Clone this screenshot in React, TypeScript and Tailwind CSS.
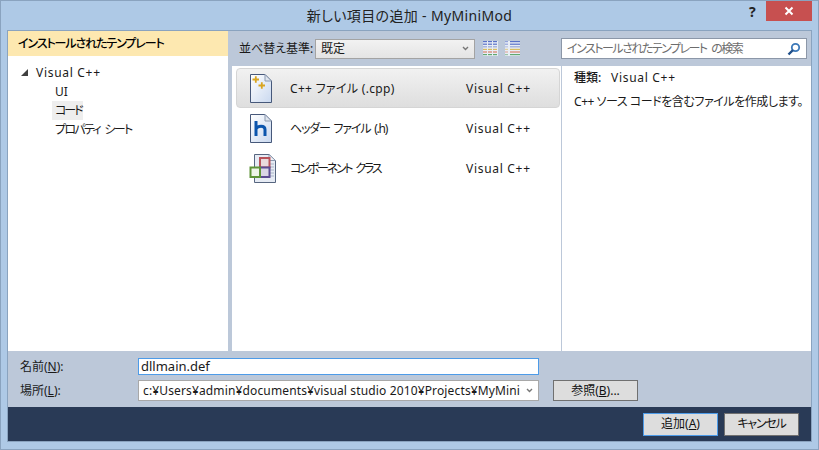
const FONT = "font-['Noto_Sans','Noto_Sans_CJK_JP',sans-serif] [font-feature-settings:'palt']";

function DocIcon({ children }: { children?: React.ReactNode }) {
  return (
    <svg width="24" height="31" viewBox="0 0 24 31" className="shrink-0">
      <defs>
        <linearGradient id="doc" x1="0" y1="0" x2="1" y2="1">
          <stop offset="0" stopColor="#ffffff" />
          <stop offset="1" stopColor="#c9d8ef" />
        </linearGradient>
      </defs>
      <path d="M1.5 1.5H16L22.5 8V29.5H1.5Z" fill="url(#doc)" stroke="#46587a" />
      <path d="M16 1.5V8H22.5Z" fill="#dfe5ee" stroke="#8c9ab0" />
      {children}
    </svg>
  );
}

function CppIcon() {
  return (
    <DocIcon>
      <path d="M3.5 6.5H10M6.8 3.2V9.8M9.5 12.5H16M12.8 9.2V15.8" stroke="#d9a520" strokeWidth="1.8" />
    </DocIcon>
  );
}

function HeaderIcon() {
  return (
    <DocIcon>
      <path d="M7 8V23M7 16C8.5 12.5 16 12 16 16.5V23" fill="none" stroke="#0b55ad" strokeWidth="3" />
    </DocIcon>
  );
}

function ClassIcon() {
  return (
    <svg width="28" height="31" viewBox="0 0 28 31" className="shrink-0">
      <path d="M5.5 1.5H20L26.5 7.5V29.5H5.5Z" fill="#e6ebf4" stroke="#56657f" />
      <path d="M20 1.5V7.5H26.5Z" fill="#f1f3f7" stroke="#8c9ab0" />
      <path d="M21 11H25M21 14H25M21 17H25M21 20H25M21 23H25" stroke="#a9b4c6" />
      <rect x="11" y="5" width="9.5" height="9.5" fill="#e9d9dc" stroke="#b8525a" strokeWidth="2" />
      <rect x="11" y="14.5" width="9.5" height="9.5" fill="#d9d5e6" stroke="#5b4a92" strokeWidth="2" />
      <rect x="1.5" y="14.5" width="9.5" height="9.5" fill="#eef5e8" stroke="#5e9438" strokeWidth="2" />
    </svg>
  );
}

function ViewIcon({ wide }: { wide?: boolean }) {
  const colors = ["#5a72c8", "#5a72c8", "#9aa8d8", "#d8bd60", "#d8806a", "#62a870"];
  const cols = wide ? [[5, 10]] : [[0, 4], [5, 4], [10, 4]];
  return (
    <svg width="15" height="15" viewBox="0 0 15 15" className="bg-[#e8edf5]">
      {wide && colors.map((c, i) => <rect key={i} x="0" y={i * 2.6} width="3" height="1.2" fill={c} opacity="0.6" />)}
      {cols.map(([x, w]) =>
        colors.map((c, i) => <rect key={`${x}-${i}`} x={x} y={i * 2.6} width={w} height="1.2" fill={c} />),
      )}
    </svg>
  );
}

function Row({ icon, name, selected, nameClass }: { icon: React.ReactNode; name: string; selected?: boolean; nameClass: string }) {
  return (
    <div
      className={`flex h-10 items-center rounded-sm border pl-[12px] ${
        selected ? "border-[#d5d5d5] bg-gradient-to-b from-[#f1f1f1] to-[#dedede]" : "border-transparent"
      }`}
    >
      <div className="flex w-[41px] justify-start">{icon}</div>
      <span className={`w-[176px] whitespace-nowrap pt-[2px] ${nameClass}`}>{name}</span>
      <span className="pt-[2px] tracking-[0.7px]">Visual C++</span>
    </div>
  );
}

function Btn({ children, primary, wide }: { children: React.ReactNode; primary?: boolean; wide?: boolean }) {
  return (
    <button
      className={`flex items-center justify-center border bg-[#dddddd] text-[12px] text-[#111] ${
        primary ? "border-[#4d9be8]" : "border-[#707070]"
      } ${wide ? "h-[21px] w-[85px]" : "h-[23px] w-[75px]"}`}
    >
      {children}
    </button>
  );
}

export default function App() {
  return (
    <div className={`${FONT} flex h-[450px] w-[819px] flex-col overflow-hidden border border-[#8aa3bf] bg-[#aec9e6] text-[12px] text-[#1a1a1a]`}>
      <div className="relative flex h-[29px] shrink-0 items-center justify-center text-[14px] tracking-[0.35px] text-[#222]">
        新しい項目の追加 - MyMiniMod
        <span className="absolute right-[62px] top-[0px] text-[14px] font-bold text-[#222]">?</span>
        <div className="absolute right-[6px] top-0 flex h-5 w-[46px] items-center justify-center bg-[#c75050]">
          <svg width="10" height="10" viewBox="0 0 10 10">
            <path d="M1.5 1.5L8.5 8.5M8.5 1.5L1.5 8.5" stroke="#fff" strokeWidth="2" />
          </svg>
        </div>
      </div>

      <div className="mx-[6px] mb-[7px] flex min-h-0 flex-1 flex-col border border-[#8aa3bf] bg-[#bcc8d9]">
        <div className="flex h-[320px] shrink-0">
          <div className="flex w-[220px] shrink-0 flex-col bg-white">
            <div className="flex h-[25px] items-center whitespace-nowrap bg-[#fde8b0] pl-[10px] font-medium tracking-[-1.1px] text-black">
              インストールされたテンプレート
            </div>
            <div className="flex flex-col pt-[7px]">
              <div className="flex h-[19px] items-center pl-[13px]">
                <svg width="7" height="7" viewBox="0 0 7 7" className="mr-[8px]">
                  <path d="M7 0V7H0Z" fill="#404040" />
                </svg>
                <span className="tracking-[0.7px]">Visual C++</span>
              </div>
              <div className="flex h-[19px] items-center pl-[47px]">UI</div>
              <div className="ml-[44px] flex h-[19px] w-[31px] items-center whitespace-nowrap bg-[#eeeeee] pl-[3px] tracking-[-2px]">コード</div>
              <div className="flex h-[19px] items-center pl-[47px] tracking-[-1.7px] [word-spacing:3px]">プロパティ シート</div>
            </div>
          </div>

          <div className="flex min-w-0 flex-1 flex-col">
            <div className="flex h-[35px] shrink-0 items-center pl-[11px]">
              <span className="w-[73px] whitespace-nowrap">並べ替え基準:</span>
              <div className="ml-[3px] flex h-[20px] w-[160px] items-center justify-between border border-[#a3a3a3] bg-gradient-to-b from-[#f2f2f2] to-[#e4e4e4] pl-[5px] pr-[5px]">
                <span>既定</span>
                <svg width="7" height="5" viewBox="0 0 7 5">
                  <path d="M1 1L3.5 3.5L6 1" fill="none" stroke="#777" strokeWidth="1.4" />
                </svg>
              </div>
              <div className="ml-[8px] flex gap-[7px]">
                <ViewIcon />
                <ViewIcon wide />
              </div>
              <div className="ml-[41px] flex h-[21px] w-[246px] items-center justify-between border border-[#8c97a8] bg-white pl-[5px] pr-[5px] text-[#6d6d6d]">
                <span className="whitespace-nowrap tracking-[-1.5px] [word-spacing:3px]">インストールされたテンプレート の検索</span>
                <svg width="14" height="14" viewBox="0 0 14 14">
                  <circle cx="8.5" cy="5.5" r="3.7" fill="none" stroke="#3b78b8" strokeWidth="1.8" />
                  <path d="M6 8L1.5 12.5" stroke="#1f4f8a" strokeWidth="2.4" />
                </svg>
              </div>
            </div>
            <div className="flex min-h-0 flex-1">
              <div className="ml-[4px] w-[329px] shrink-0 bg-white pl-[4px] pr-px pt-[2px]">
                <Row icon={<CppIcon />} name="C++ ファイル (.cpp)" selected nameClass="tracking-[0.3px]" />
                <Row icon={<HeaderIcon />} name="ヘッダー ファイル (.h)" nameClass="tracking-[-1.2px] [word-spacing:2px]" />
                <Row icon={<ClassIcon />} name="コンポーネント クラス" nameClass="tracking-[-2.2px] [word-spacing:3px]" />
              </div>
              <div className="ml-px flex-1 bg-white pl-[12px] pt-[2px]">
                <div className="flex h-[20px] items-center">
                  <span className="w-[37px] font-medium">種類:</span>
                  <span className="tracking-[0.7px]">Visual C++</span>
                </div>
                <div className="mt-[5px] whitespace-nowrap tracking-[-0.45px]">C++ ソース コードを含むファイルを作成します。</div>
              </div>
            </div>
          </div>
        </div>

        <div className="flex h-[56px] shrink-0 flex-col pl-[12px] pt-[6px]">
          <div className="flex h-[19px] items-center">
            <span className="w-[118px]">名前(<u>N</u>):</span>
            <div className="flex h-[17px] w-[401px] items-center border border-[#4d9be8] bg-white pl-[2px] text-[13px]">dllmain.def</div>
          </div>
          <div className="mt-[4px] flex h-[21px] items-center">
            <span className="w-[118px]">場所(<u>L</u>):</span>
            <div className="flex h-[21px] w-[401px] items-center justify-between border border-[#a8a8a8] bg-white pl-[4px] pr-[5px]">
              <span className="w-[380px] overflow-hidden whitespace-nowrap tracking-[0.14px]">c:¥Users¥admin¥documents¥visual studio 2010¥Projects¥MyMini</span>
              <svg width="7" height="5" viewBox="0 0 7 5">
                <path d="M1 1L3.5 3.5L6 1" fill="none" stroke="#777" strokeWidth="1.4" />
              </svg>
            </div>
            <div className="ml-[14px]">
              <Btn wide>
                参照(<u>B</u>)...
              </Btn>
            </div>
          </div>
        </div>

        <div className="flex flex-1 items-center justify-end gap-[6px] bg-[#293a56] pr-[12px]">
          <Btn primary>
            追加(<u>A</u>)
          </Btn>
          <Btn>
            <span className="tracking-[-1.2px]">キャンセル</span>
          </Btn>
        </div>
      </div>
    </div>
  );
}
